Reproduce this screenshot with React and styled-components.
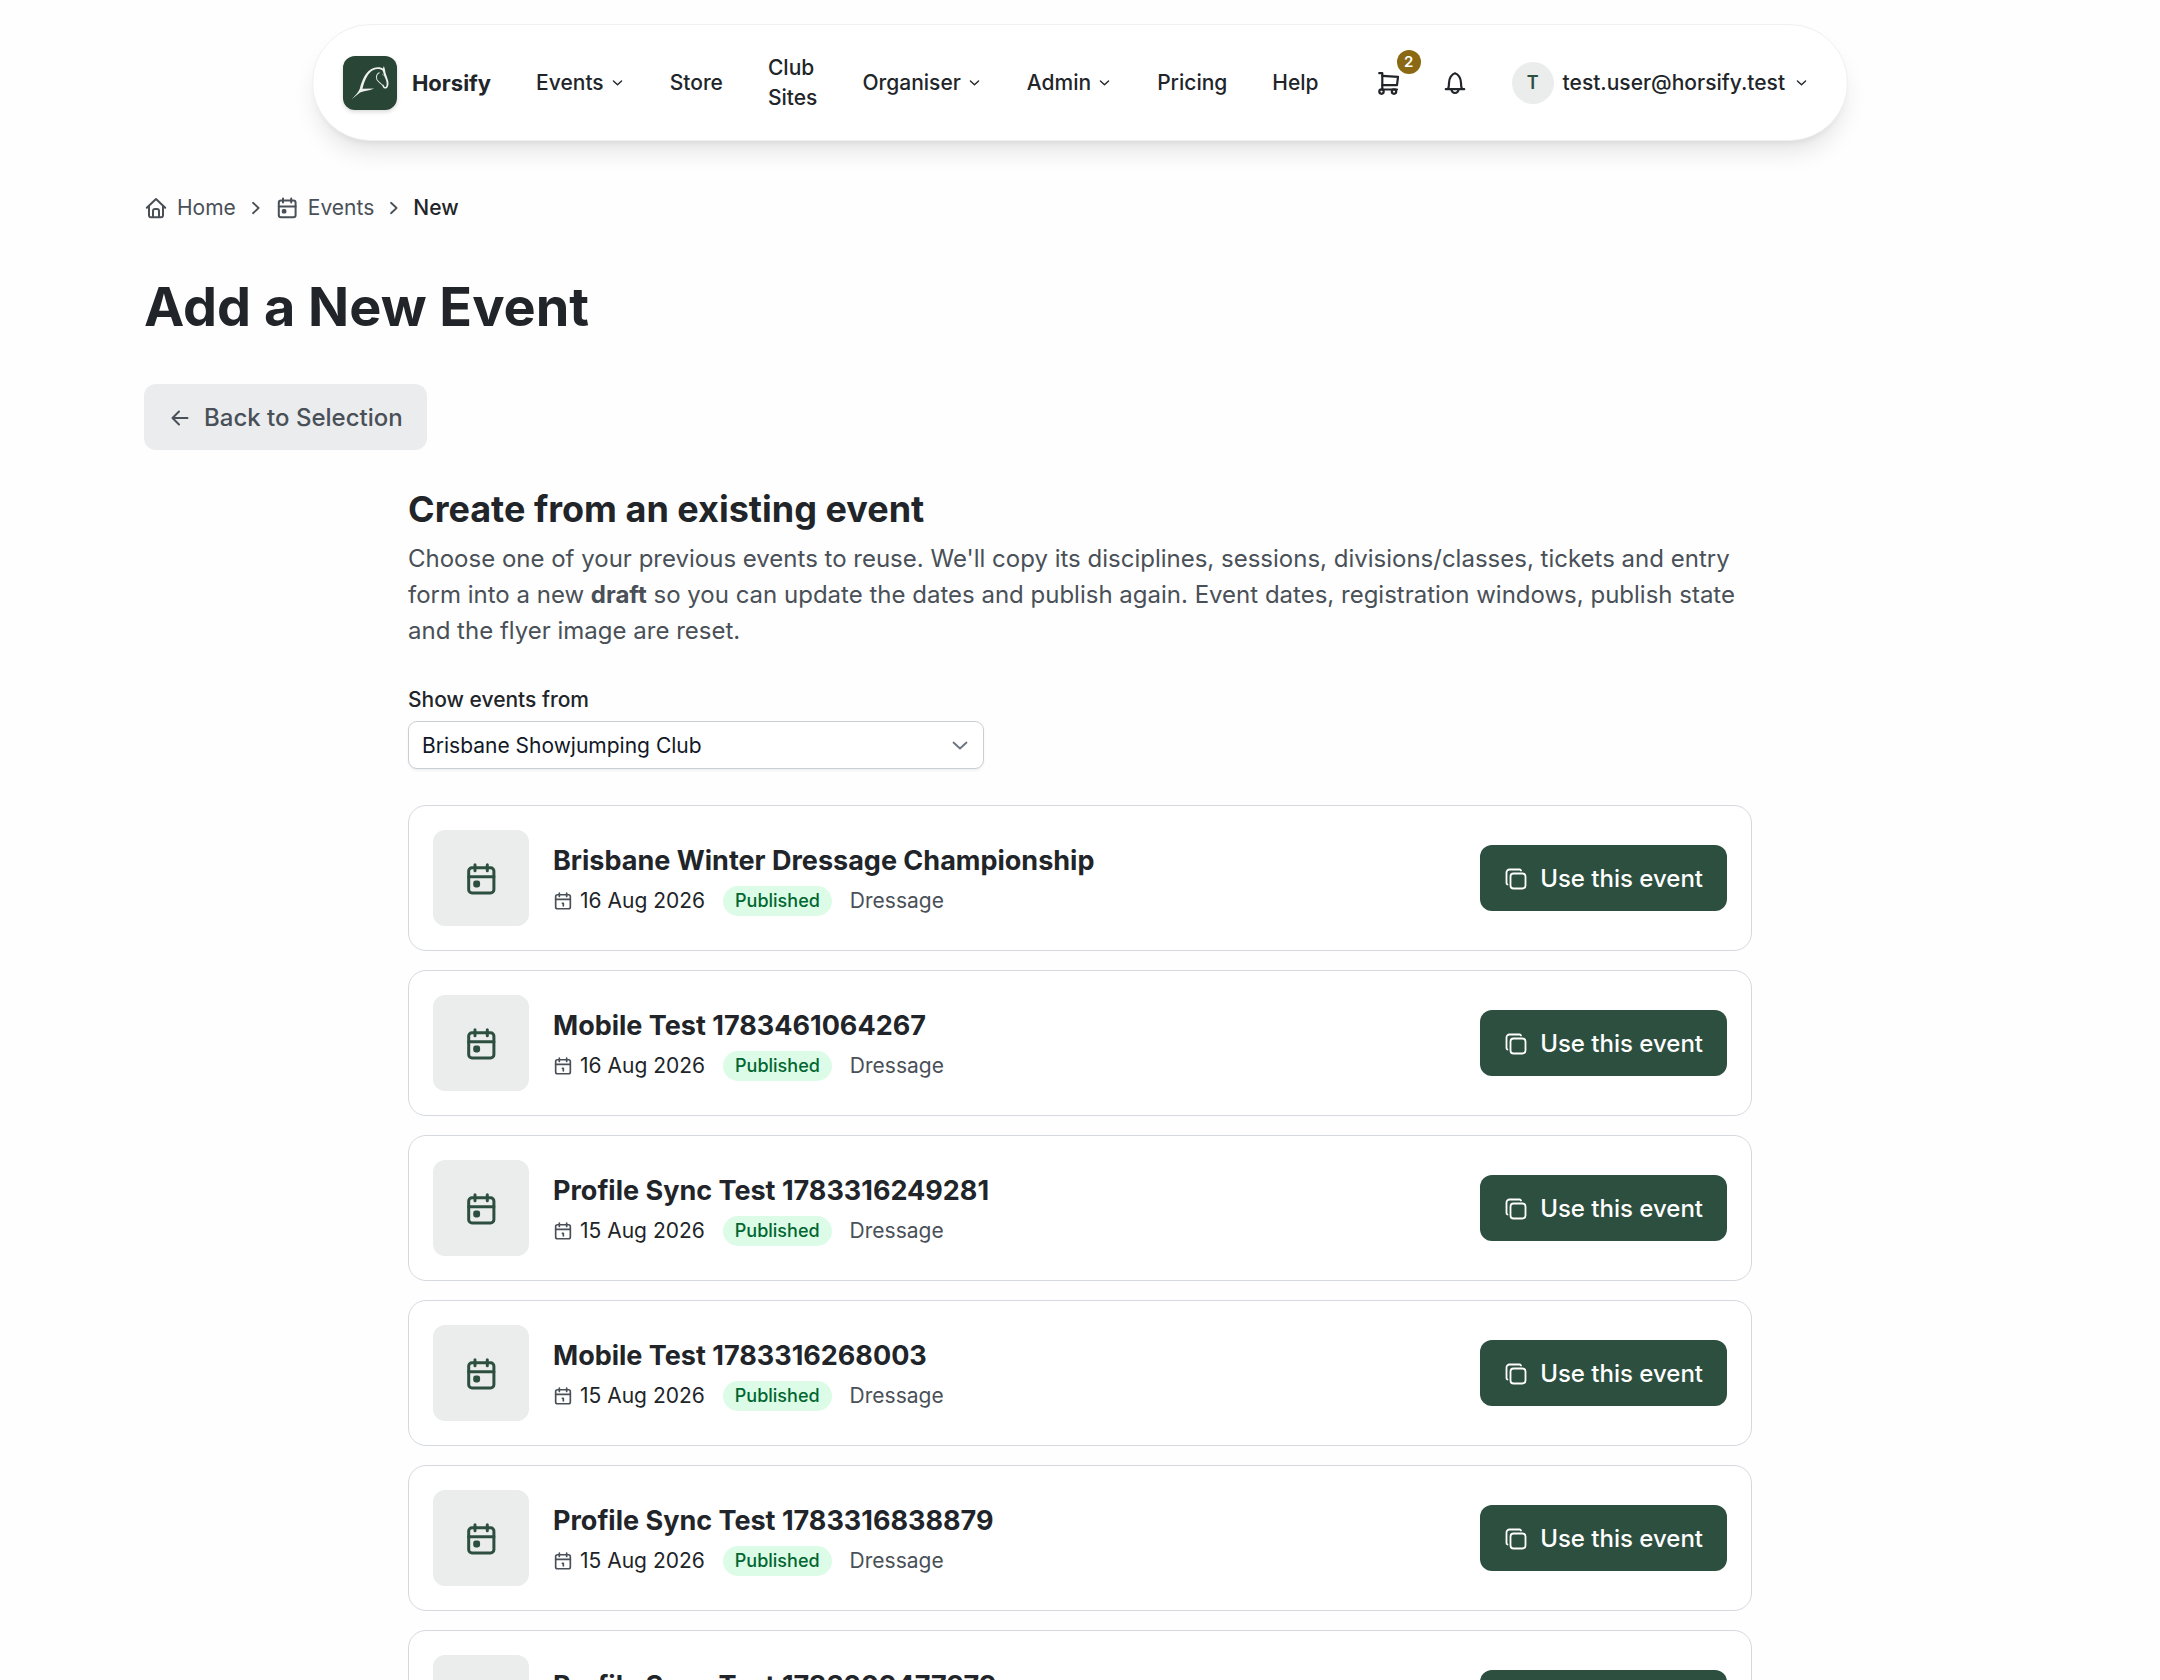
import { useState } from "react";
import styled, { createGlobalStyle } from "styled-components";

const GlobalStyle = createGlobalStyle`
    *, *::before, *::after {
        box-sizing: border-box;
    }

    body {
        margin: 0;
        background: #fefefe;
        color: #212529;
        font-family: Inter, "Liberation Sans", sans-serif;
        font-size: 21px;
        line-height: 30px;
        overflow-x: hidden;
    }

    button, select {
        font: inherit;
        color: inherit;
    }

    a {
        color: inherit;
        text-decoration: none;
    }

    h1, h2, h3, p, ul, ol {
        margin: 0;
        padding: 0;
    }

    ul, ol {
        list-style: none;
    }
`

// every icon shares the same stroke set up, only paths and size differ
const Svg = styled.svg`
    display: block;
    flex: none;
    width: ${({ $size }) => $size}px;
    height: ${({ $size }) => $size}px;
    fill: none;
    stroke: currentColor;
    stroke-width: ${({ $stroke }) => $stroke || 2};
    stroke-linecap: round;
    stroke-linejoin: round;
`

const ChevronDown = ({ size = 15, stroke = 2.2 }) => (
    <Svg viewBox="0 0 24 24" $size={size} $stroke={stroke} aria-hidden="true">
        <path d="M5.5 9.5 12 15.5 18.5 9.5" />
    </Svg>
)

const ChevronRight = () => (
    <Svg viewBox="0 0 24 24" $size={18} $stroke={2.4} aria-hidden="true">
        <path d="M8 5 15.5 12 8 19" />
    </Svg>
)

const ArrowLeft = () => (
    <Svg viewBox="0 0 24 24" $size={24} aria-hidden="true">
        <path d="M19.5 12h-15M11 5.5 4.5 12l6.5 6.5" />
    </Svg>
)

const HomeIcon = () => (
    <Svg viewBox="0 0 24 24" $size={24} aria-hidden="true">
        <path d="M2.8 11.8 12 3l9.2 8.8M5 10v9.5a1.8 1.8 0 0 0 1.8 1.8h10.4a1.8 1.8 0 0 0 1.8-1.8V10" />
        <path d="M9 21v-6a2 2 0 0 1 2-2h2a2 2 0 0 1 2 2v6" />
    </Svg>
)

const CalendarIcon = ({ size }) => (
    <Svg viewBox="0 0 24 24" $size={size} aria-hidden="true">
        <rect x="3.8" y="4.5" width="16.8" height="16.8" rx="2.2" />
        <path d="M3.8 10.5h16.8M8 2.5v4M16.2 2.5v4" />
        <rect x="7.8" y="14" width="2.6" height="2.6" rx="0.6" fill="currentColor" />
    </Svg>
)

const DateIcon = () => (
    <Svg viewBox="0 0 24 24" $size={20} aria-hidden="true">
        <rect x="3.2" y="4.5" width="17.6" height="16.8" rx="2.2" />
        <path d="M3.2 10h17.6M7.6 2.5v4M16.4 2.5v4" />
        <path d="M11.2 14.8h1.2v3.2" />
    </Svg>
)

const CopyIcon = () => (
    <Svg viewBox="0 0 24 24" $size={24} $stroke={1.8} aria-hidden="true">
        <rect x="6.5" y="6.5" width="15" height="15" rx="3" />
        <path d="M17 3.5a1.5 1.5 0 0 0-1.5-1H5.5a3 3 0 0 0-3 3v10.5a1.500 1.500 0 0 0 1 1.500" />
    </Svg>
)

const CartIcon = () => (
    <Svg viewBox="0 0 24 24" $size={24} $stroke={2.2} aria-hidden="true">
        <path d="M2.2 2.2h3.100v16.300" />
        <path d="M5.3 4.8 21 5.8l-1 8.400H5.300M20 18.500H5" />
        <circle cx="4.5" cy="20.600" r="2.200" />
        <circle cx="17" cy="20.600" r="2.200" />
    </Svg>
)

const BellIcon = () => (
    <Svg viewBox="0 0 24 24" $size={24} $stroke={2.2} aria-hidden="true">
        <path d="M2.8 18.2h18.400M5 18c.8-1.500 1-3.500 1-6C6 7.500 8.500 3.200 12 2.200c3.500 1 6 5.300 6 9.800 0 2.500.2 4.500 1 6" />
        <path d="M8.500 18.500a3.500 3.500 0 0 0 7 0" />
    </Svg>
)

const HorseLogo = () => (
    <svg viewBox="0 0 161 161" width="54" height="54" aria-hidden="true">
        <path
            d="M26 129C38 117 46 108 50 98C57 70 69 43 91 36C101 32 112 33 119 37L122 30L125 40C126 53 132 62 135 75C137 87 134 97 126 97C120 98 118 92 117 86L121 86C122 92 125 94 128 92C132 86 130 75 126 66C121 57 121 49 118 43C108 37 99 38 91 42C75 49 65 71 58 98L93 97C77 104 62 104 51 109Z"
            fill="#edf0ee"
        />
        <path
            d="M108 50C99 55 99 64 101 70C105 78 114 81 119 89"
            fill="none"
            stroke="#dfe5e1"
            strokeWidth="3"
            strokeLinecap="round"
        />
        <path d="M117 55l4 3" stroke="#dfe5e1" strokeWidth="2" />
    </svg>
)

const NavBar = styled.header`
    display: flex;
    align-items: center;
    width: fit-content;
    max-width: 100%;
    min-height: 117px;
    margin: 24px auto 0;
    padding: 0 26px 0 30px;
    background: #fff;
    border: 1px solid #f0f0f0;
    border-radius: 60px;
    box-shadow: 0 15px 23px -4px rgba(0, 0, 0, 0.1), 0 6px 9px -6px rgba(0, 0, 0, 0.1);
`

const Brand = styled.a`
    display: flex;
    align-items: center;
    gap: 15px;
    margin-right: 45px;
    font-size: 22px;
    font-weight: 700;
`

const LogoTile = styled.span`
    display: block;
    width: 54px;
    height: 54px;
    border-radius: 12px;
    background: #284536;
    box-shadow: 0 2px 4px rgba(0, 0, 0, 0.15);
    overflow: hidden;

    & svg {
        display: block;
    }
`

const NavLinks = styled.nav`
    display: flex;
    align-items: center;
    gap: 45px;
    font-weight: 500;
`

const NavLink = styled.a`
    width: ${({ $narrow }) => ($narrow ? "min-content" : "auto")};
`

const MenuButton = styled.button`
    display: flex;
    align-items: center;
    gap: 6px;
    padding: 0;
    border: none;
    background: none;
    font-weight: 500;
    cursor: pointer;
`

const Actions = styled.div`
    display: flex;
    align-items: center;
    gap: 24px;
    margin-left: 49px;
`

const IconButton = styled.button`
    position: relative;
    display: flex;
    padding: 9px;
    border: none;
    background: none;
    cursor: pointer;
`

const CartCount = styled.span`
    position: absolute;
    top: -12px;
    right: -11px;
    width: 24px;
    height: 24px;
    border-radius: 50%;
    background: #8b6914;
    color: #fff;
    font-size: 15px;
    font-weight: 600;
    line-height: 24px;
    text-align: center;
`

const UserButton = styled(MenuButton)`
    gap: 9px;
    padding: 0 12px;
`

const Avatar = styled.span`
    width: 42px;
    height: 42px;
    border-radius: 50%;
    background: #eaedec;
    color: #2d4f3f;
    font-size: 18px;
    font-weight: 600;
    line-height: 42px;
    text-align: center;
`

const Page = styled.main`
    max-width: 1920px;
    margin: 0 auto;
    padding: 52px 24px 48px;
`

const Crumbs = styled.ol`
    display: flex;
    align-items: center;
    gap: 10px;
    color: #495057;
`

const Crumb = styled.li`
    display: flex;
    align-items: center;
    gap: 11px;

    & a {
        display: flex;
        align-items: center;
        gap: 9px;
    }

    &[aria-current] {
        color: #212529;
        font-weight: 500;
    }
`

const PageTitle = styled.h1`
    margin-top: 51px;
    font-size: 54px;
    font-weight: 700;
    line-height: 66px;
`

const Button = styled.button`
    display: flex;
    align-items: center;
    gap: 12px;
    height: 66px;
    padding: 2px 24px 0;
    border: none;
    border-radius: 12px;
    background: ${({ $primary }) => ($primary ? "#2d4f3f" : "#ebecee")};
    color: ${({ $primary }) => ($primary ? "#fff" : "#495057")};
    font-size: 24px;
    font-weight: 500;
    white-space: nowrap;
    cursor: pointer;
`

const BackRow = styled.div`
    display: flex;
    margin-top: 44px;
`

const Picker = styled.section`
    max-width: 1344px;
    margin: 36px auto 0;
`

const SectionTitle = styled.h2`
    font-size: 36px;
    font-weight: 700;
    line-height: 46px;
`

const Intro = styled.p`
    margin-top: 9px;
    color: #495057;
    font-size: 24px;
    line-height: 36px;
`

const Field = styled.div`
    display: flex;
    flex-direction: column;
    gap: 6px;
    max-width: 576px;
    margin-top: 36px;

    & label {
        font-weight: 500;
    }
`

// select and its chevron share one grid cell
const SelectBox = styled.div`
    display: grid;
    align-items: center;
    color: #6b7280;

    & > * {
        grid-area: 1 / 1;
    }

    & svg {
        justify-self: end;
        margin-right: 12px;
        pointer-events: none;
    }
`

const Select = styled.select`
    appearance: none;
    width: 100%;
    height: 48px;
    padding: 2px 42px 0 13px;
    border: 1px solid #c9cdd4;
    border-radius: 9px;
    background: #fff;
    box-shadow: 0 2px 3px rgba(0, 0, 0, 0.05);
    color: #111827;
`

const EventList = styled.ul`
    display: flex;
    flex-direction: column;
    gap: 19px;
    margin-top: 36px;
`

const EventCard = styled.li`
    display: flex;
    align-items: center;
    gap: 24px;
    padding: 24px;
    border: 1px solid #d5d9de;
    border-radius: 18px;
    background: #fff;
`

const Thumb = styled.span`
    display: flex;
    align-items: center;
    justify-content: center;
    flex: none;
    width: 96px;
    height: 96px;
    padding-top: 2px;
    border-radius: 12px;
    background: #eaedec;
    color: #2d4f3f;
`

const EventInfo = styled.div`
    flex: 1;
    min-width: 0;
`

const EventName = styled.h3`
    margin-bottom: 4px;
    font-size: 27px;
    font-weight: 700;
    line-height: 42px;
`

const EventMeta = styled.div`
    display: flex;
    align-items: center;
    gap: 18px;
    color: #495057;
`

const EventDate = styled.span`
    display: flex;
    align-items: center;
    gap: 7px;

    & time {
        color: #212529;
    }
`

const Status = styled.span`
    padding: 0 12px;
    border-radius: 15px;
    background: #dcfce7;
    color: #016630;
    font-size: 18px;
    font-weight: 500;
`

const navItems = [
    { label: "Events", menu: true },
    { label: "Store" },
    { label: "Club Sites", narrow: true },
    { label: "Organiser", menu: true },
    { label: "Admin", menu: true },
    { label: "Pricing" },
    { label: "Help" },
]

const clubs = ["Brisbane Showjumping Club"]

const events = [
    { name: "Brisbane Winter Dressage Championship", date: "16 Aug 2026", iso: "2026-08-16" },
    { name: "Mobile Test 1783461064267", date: "16 Aug 2026", iso: "2026-08-16" },
    { name: "Profile Sync Test 1783316249281", date: "15 Aug 2026", iso: "2026-08-15" },
    { name: "Mobile Test 1783316268003", date: "15 Aug 2026", iso: "2026-08-15" },
    { name: "Profile Sync Test 1783316838879", date: "15 Aug 2026", iso: "2026-08-15" },
    { name: "Profile Sync Test 1783209477979", date: "15 Aug 2026", iso: "2026-08-15" },
]

const Header = () => (
    <NavBar>
        <Brand href="#home">
            <LogoTile><HorseLogo /></LogoTile>
            Horsify
        </Brand>
        <NavLinks>
            {navItems.map(({ label, menu, narrow }) =>
                menu ? (
                    <MenuButton key={label} type="button">
                        {label}
                        <ChevronDown />
                    </MenuButton>
                ) : (
                    <NavLink key={label} href={`#${label}`} $narrow={narrow}>{label}</NavLink>
                )
            )}
        </NavLinks>
        <Actions>
            <IconButton type="button" aria-label="Cart">
                <CartIcon />
                <CartCount>2</CartCount>
            </IconButton>
            <IconButton type="button" aria-label="Notifications">
                <BellIcon />
            </IconButton>
            <UserButton type="button">
                <Avatar>T</Avatar>
                test.user@horsify.test
                <ChevronDown />
            </UserButton>
        </Actions>
    </NavBar>
)

const EventRow = ({ event }) => (
    <EventCard>
        <Thumb><CalendarIcon size={36} /></Thumb>
        <EventInfo>
            <EventName>{event.name}</EventName>
            <EventMeta>
                <EventDate>
                    <DateIcon />
                    <time dateTime={event.iso}>{event.date}</time>
                </EventDate>
                <Status>Published</Status>
                <span>Dressage</span>
            </EventMeta>
        </EventInfo>
        <Button type="button" $primary>
            <CopyIcon />
            Use this event
        </Button>
    </EventCard>
)

const App = () => {
    const [club, setClub] = useState(clubs[0])

    return (
        <>
            <GlobalStyle />
            <Header />
            <Page>
                <Crumbs>
                    <Crumb>
                        <a href="#home"><HomeIcon />Home</a>
                        <ChevronRight />
                    </Crumb>
                    <Crumb>
                        <a href="#events"><CalendarIcon size={24} />Events</a>
                        <ChevronRight />
                    </Crumb>
                    <Crumb aria-current="page">New</Crumb>
                </Crumbs>
                <PageTitle>Add a New Event</PageTitle>
                <BackRow>
                    <Button type="button">
                        <ArrowLeft />
                        Back to Selection
                    </Button>
                </BackRow>
                <Picker>
                    <SectionTitle>Create from an existing event</SectionTitle>
                    <Intro>
                        Choose one of your previous events to reuse. We'll copy its disciplines, sessions,
                        divisions/classes, tickets and entry form into a new <strong>draft</strong> so you
                        can update the dates and publish again. Event dates, registration windows, publish
                        state and the flyer image are reset.
                    </Intro>
                    <Field>
                        <label htmlFor="club">Show events from</label>
                        <SelectBox>
                            <Select id="club" value={club} onChange={(e) => setClub(e.target.value)}>
                                {clubs.map((name) => <option key={name}>{name}</option>)}
                            </Select>
                            <ChevronDown size={24} stroke={1.8} />
                        </SelectBox>
                    </Field>
                    <EventList>
                        {events.map((event) => <EventRow key={event.name} event={event} />)}
                    </EventList>
                </Picker>
            </Page>
        </>
    )
}

export default App;
